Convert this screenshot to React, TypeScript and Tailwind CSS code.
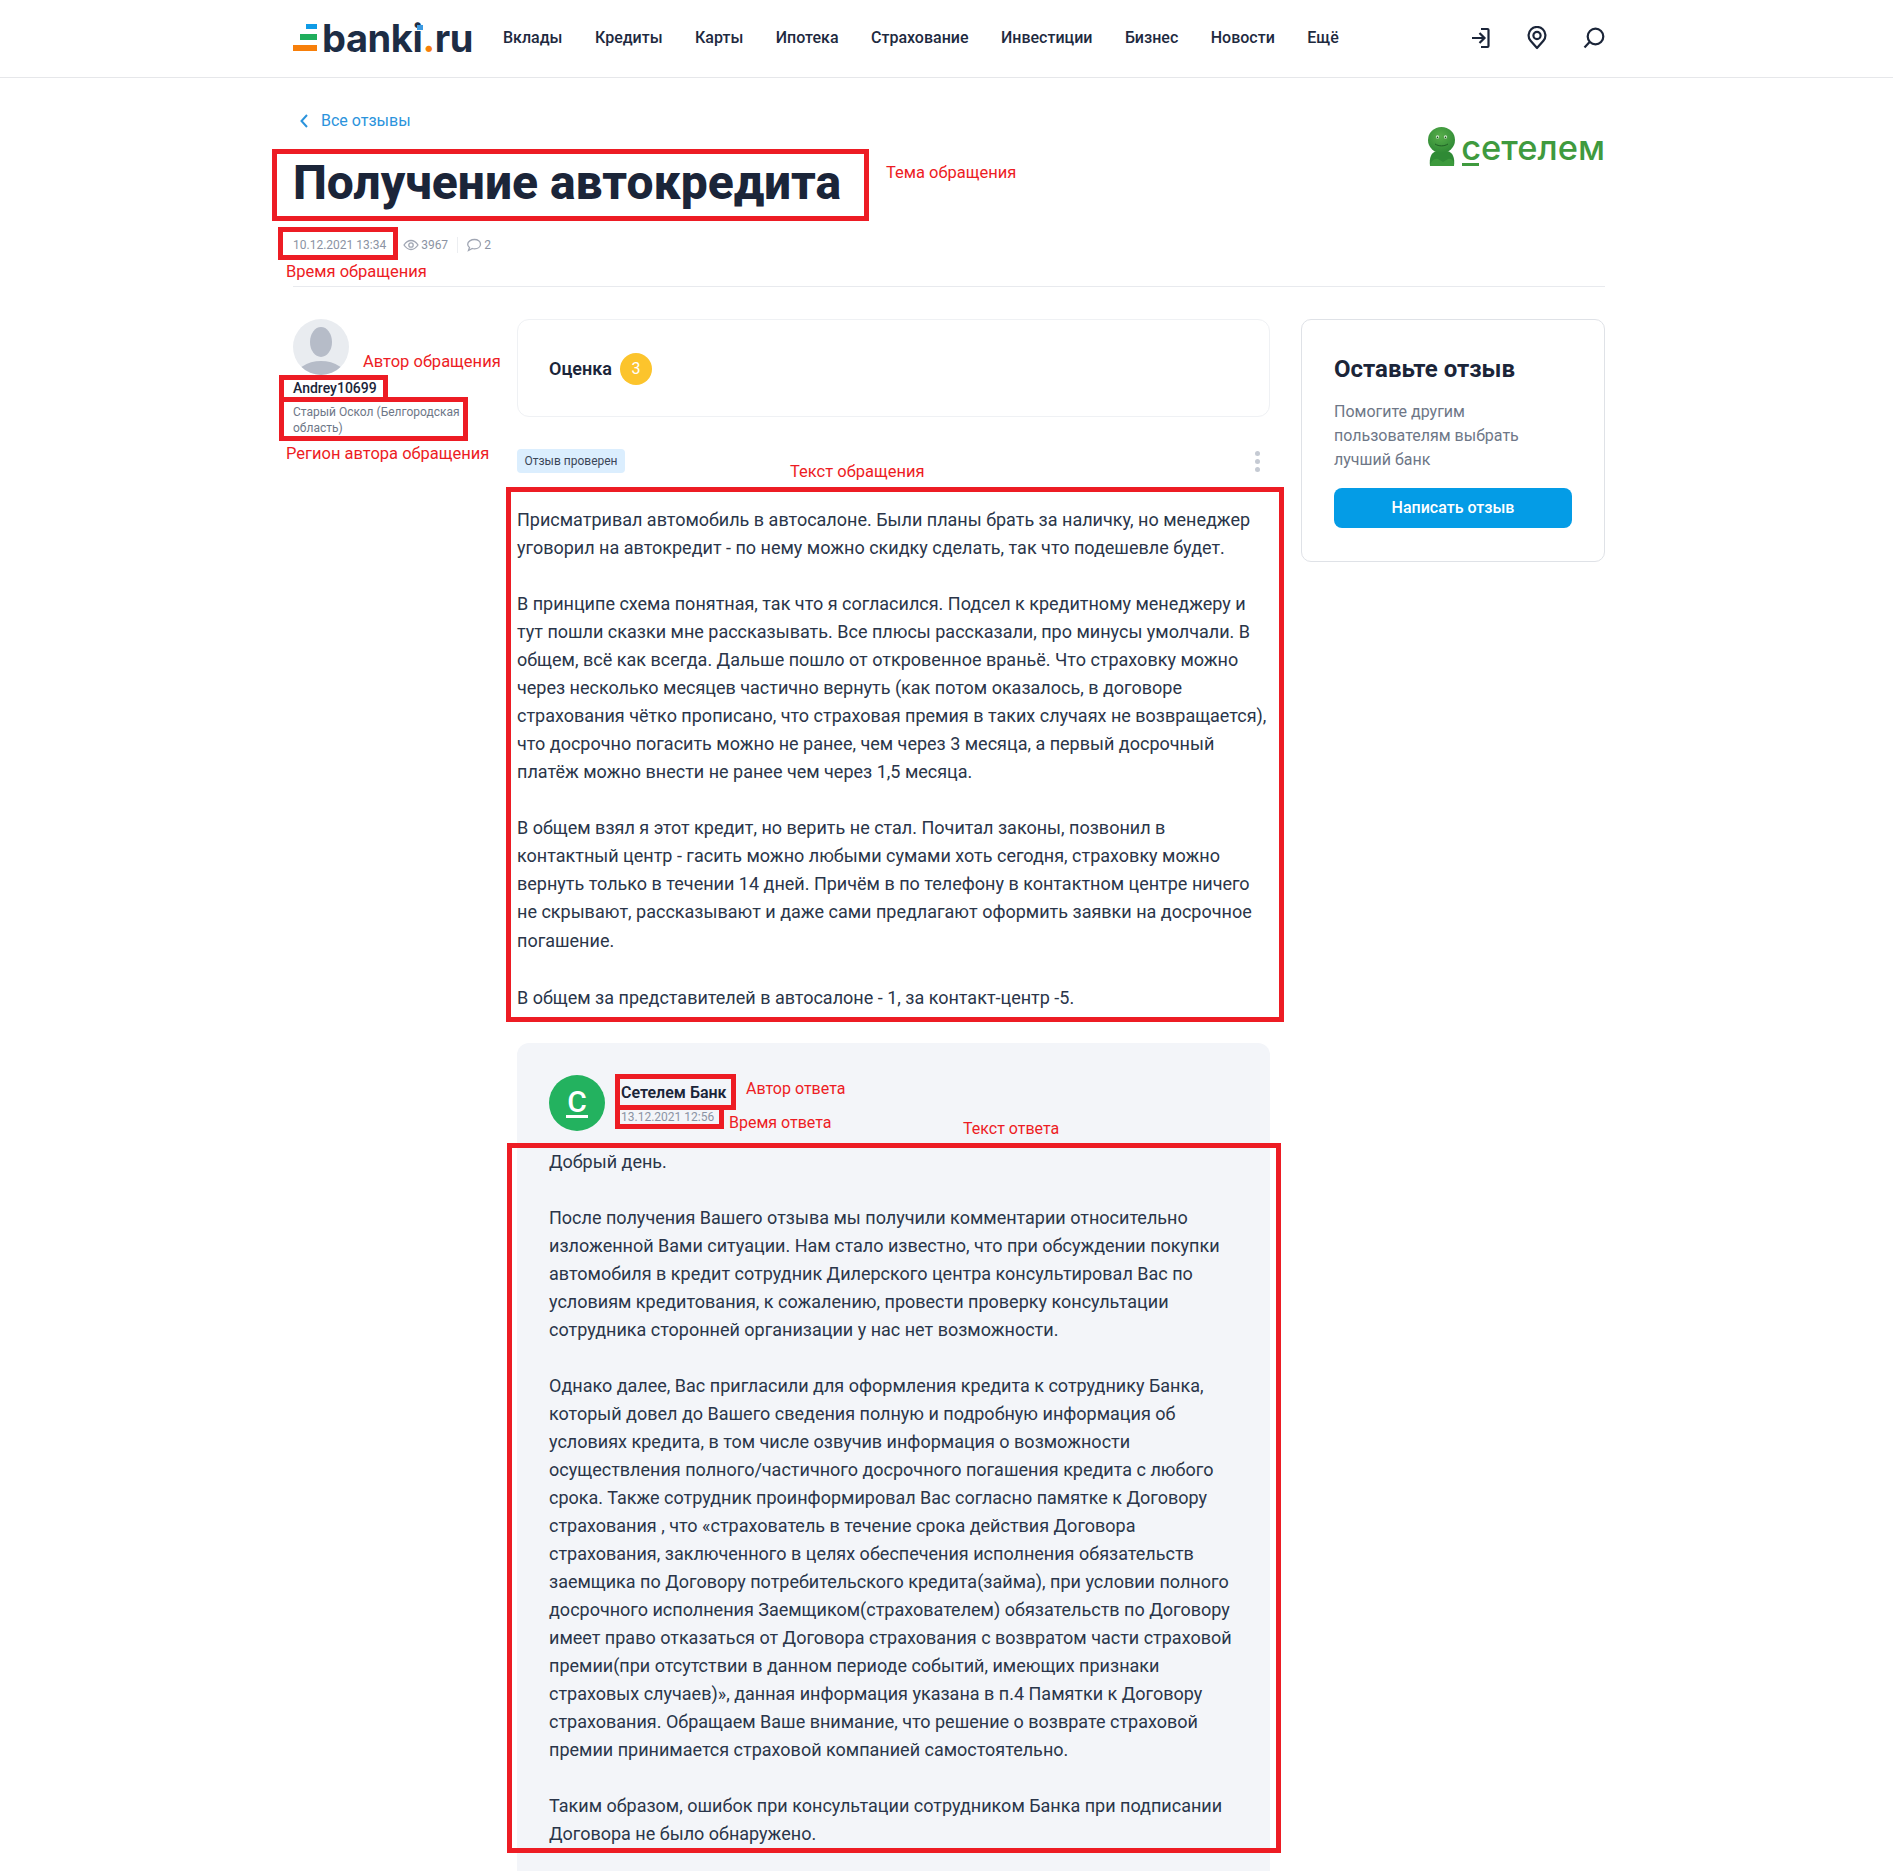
import React from 'react';

const navItems = ['Вклады', 'Кредиты', 'Карты', 'Ипотека', 'Страхование', 'Инвестиции', 'Бизнес', 'Новости', 'Ещё'];

const reviewText = [
  [
    'Присматривал автомобиль в автосалоне. Были планы брать за наличку, но менеджер',
    'уговорил на автокредит - по нему можно скидку сделать, так что подешевле будет.',
  ],
  [
    'В принципе схема понятная, так что я согласился. Подсел к кредитному менеджеру и',
    'тут пошли сказки мне рассказывать. Все плюсы рассказали, про минусы умолчали. В',
    'общем, всё как всегда. Дальше пошло от откровенное враньё. Что страховку можно',
    'через несколько месяцев частично вернуть (как потом оказалось, в договоре',
    'страхования чётко прописано, что страховая премия в таких случаях не возвращается),',
    'что досрочно погасить можно не ранее, чем через 3 месяца, а первый досрочный',
    'платёж можно внести не ранее чем через 1,5 месяца.',
  ],
  [
    'В общем взял я этот кредит, но верить не стал. Почитал законы, позвонил в',
    'контактный центр - гасить можно любыми сумами хоть сегодня, страховку можно',
    'вернуть только в течении 14 дней. Причём в по телефону в контактном центре ничего',
    'не скрывают, рассказывают и даже сами предлагают оформить заявки на досрочное',
    'погашение.',
  ],
  ['В общем за представителей в автосалоне - 1, за контакт-центр -5.'],
];

const answerText = [
  ['Добрый день.'],
  [
    'После получения Вашего отзыва мы получили комментарии относительно',
    'изложенной Вами ситуации. Нам стало известно, что при обсуждении покупки',
    'автомобиля в кредит сотрудник Дилерского центра консультировал Вас по',
    'условиям кредитования, к сожалению, провести проверку консультации',
    'сотрудника сторонней организации у нас нет возможности.',
  ],
  [
    'Однако далее, Вас пригласили для оформления кредита к сотруднику Банка,',
    'который довел до Вашего сведения полную и подробную информация об',
    'условиях кредита, в том числе озвучив информация о возможности',
    'осуществления полного/частичного досрочного погашения кредита с любого',
    'срока. Также сотрудник проинформировал Вас согласно памятке к Договору',
    'страхования , что «страхователь в течение срока действия Договора',
    'страхования, заключенного в целях обеспечения исполнения обязательств',
    'заемщика по Договору потребительского кредита(займа), при условии полного',
    'досрочного исполнения Заемщиком(страхователем) обязательств по Договору',
    'имеет право отказаться от Договора страхования с возвратом части страховой',
    'премии(при отсутствии в данном периоде событий, имеющих признаки',
    'страховых случаев)», данная информация указана в п.4 Памятки к Договору',
    'страхования. Обращаем Ваше внимание, что решение о возврате страховой',
    'премии принимается страховой компанией самостоятельно.',
  ],
  [
    'Таким образом, ошибок при консультации сотрудником Банка при подписании',
    'Договора не было обнаружено.',
  ],
];

const TextBlock: React.FC<{ paragraphs: string[][] }> = ({ paragraphs }) => (
  <div className="flex flex-col gap-7 text-lg leading-7 text-[#2a3549]">
    {paragraphs.map((lines, i) => (
      <p key={i}>
        {lines.map((line, j) => (
          <span key={j} className={line === 'погашение.' ? 'block leading-[30px] whitespace-nowrap' : 'block whitespace-nowrap'}>
            {line}
          </span>
        ))}
      </p>
    ))}
  </div>
);

const Header = () => (
  <header className="flex h-[78px] items-center border-b border-[#e6e7ea] pb-[2px] pl-[293px]">
    <div className="relative flex h-7 w-[210px] shrink-0 items-center">
      {/* logo bars */}
      <div className="flex w-6 flex-col items-end gap-[5px]">
        <div className="h-[5px] w-[11px] bg-[#0f9be6]"></div>
        <div className="h-[6px] w-[17px] bg-[#1fae5c]"></div>
        <div className="h-[6px] w-6 bg-[#f77f0a]"></div>
      </div>
      <span className="ml-[5px] text-[38px] font-bold leading-7 tracking-[-0.4px] text-[#1d2d45] [font-family:Inter,sans-serif]">
        banki<span className="text-[#f77f0a]">.</span>ru
      </span>
      <div className="absolute left-[124px] top-[1px] h-[5px] w-[6px] bg-[#3b9ae1]"></div>
    </div>
    <nav className="flex gap-[32.5px] text-base font-medium text-[#1e2a3f]">
      {navItems.map((item) => (
        <span key={item}>{item}</span>
      ))}
    </nav>
    <div className="ml-[132px] flex items-center gap-[36px] text-[#1b2539]">
      <svg width="20" height="24" viewBox="0 0 20 24" fill="none" stroke="currentColor" strokeWidth="2.2">
        <path d="M10 3h6.5a1 1 0 0 1 1 1v16a1 1 0 0 1-1 1H10" />
        <path d="M1 12h12M8.5 7l5 5-5 5" />
      </svg>
      <svg width="20" height="24" viewBox="0 0 20 24" fill="none" stroke="currentColor" strokeWidth="2.2">
        <path d="M10 22 3.6 14.8A8.4 8.4 0 1 1 16.4 14.8Z" strokeLinejoin="round" />
        <circle cx="10" cy="9.5" r="3.6" />
      </svg>
      <svg width="22" height="22" viewBox="0 0 22 22" fill="none" stroke="currentColor" strokeWidth="2.2">
        <circle cx="12.5" cy="9.5" r="7.8" />
        <path d="M6.6 15 1.5 20.5" />
      </svg>
    </div>
  </header>
);

const Mascot = () => (
  <svg width="30" height="40" viewBox="0 0 30 40">
    <defs>
      <radialGradient id="head-shade" cx="45%" cy="35%" r="65%">
        <stop offset="0%" stopColor="#57ad4a" />
        <stop offset="100%" stopColor="#2f8a35" />
      </radialGradient>
    </defs>
    <path d="M3 39c-1-8 1-14 7-15h10c6 1 8 7 7 15Z" fill="#2f8a35" />
    <path d="M3 39c1-5 4-8 8-7l5 3 5-3c4-1 6 2 6 7Z" fill="#3c9a3c" />
    <ellipse cx="14.500" cy="13" rx="13.500" ry="13" fill="url(#head-shade)" />
    <circle cx="10.500" cy="10" r="1.700" fill="#d5ecd0" />
    <circle cx="18.500" cy="10" r="1.700" fill="#d5ecd0" />
    <circle cx="10.500" cy="10.400" r="0.800" fill="#1c4d20" />
    <circle cx="18.500" cy="10.400" r="0.800" fill="#1c4d20" />
    <path d="M8 17c4 2.500 9 2.500 13 0" fill="none" stroke="#1f5f25" strokeWidth="1" />
  </svg>
);

const Avatar = () => (
  <svg width="56" height="56" viewBox="0 0 56 56">
    <defs>
      <clipPath id="user-clip">
        <circle cx="28" cy="28" r="28" />
      </clipPath>
    </defs>
    <g clipPath="url(#user-clip)">
      <rect width="56" height="56" fill="#e9ecf0" />
      <ellipse cx="28" cy="23" rx="11" ry="15" fill="#b6bcc8" />
      <ellipse cx="28" cy="60" rx="26" ry="18" fill="#b6bcc8" />
    </g>
  </svg>
);

const Annotations = () => (
  <>
    <div className="absolute left-[272px] top-[149px] h-[72px] w-[597px] border-[5px] border-[#ed1c24]"></div>
    <div className="absolute left-[278px] top-[227px] h-[33px] w-[120px] border-[5px] border-[#ed1c24]"></div>
    <div className="absolute left-[279px] top-[375px] h-[27px] w-[109px] border-[5px] border-[#ed1c24]"></div>
    <div className="absolute left-[279px] top-[397px] h-[44px] w-[189px] border-[5px] border-[#ed1c24]"></div>
    <div className="absolute left-[506px] top-[487px] h-[535px] w-[778px] border-[5px] border-[#ed1c24]"></div>
    <div className="absolute left-[615px] top-[1074px] h-[36px] w-[121px] border-[5px] border-[#ed1c24]"></div>
    <div className="absolute left-[615px] top-[1105px] h-[24px] w-[109px] border-[5px] border-[#ed1c24]"></div>
    <div className="absolute left-[507px] top-[1143px] h-[710px] w-[774px] border-[5px] border-[#ed1c24]"></div>

    <span className="absolute left-[886px] top-[161px] text-[16.5px] leading-6 text-[#ed1c24]">Тема обращения</span>
    <span className="absolute left-[286px] top-[260px] text-[16.5px] leading-6 text-[#ed1c24]">Время обращения</span>
    <span className="absolute left-[363px] top-[350px] text-[16.5px] leading-6 text-[#ed1c24]">Автор обращения</span>
    <span className="absolute left-[286px] top-[442px] text-[16.5px] leading-6 text-[#ed1c24]">Регион автора обращения</span>
    <span className="absolute left-[790px] top-[460px] text-[16.5px] leading-6 text-[#ed1c24]">Текст обращения</span>
    <span className="absolute left-[746px] top-[1077px] text-base leading-6 text-[#ed1c24]">Автор ответа</span>
    <span className="absolute left-[729px] top-[1111px] text-base leading-6 text-[#ed1c24]">Время ответа</span>
    <span className="absolute left-[963px] top-[1117px] text-base leading-6 text-[#ed1c24]">Текст ответа</span>
  </>
);

export default function App() {
  return (
    <div className="relative h-[1871px] overflow-hidden bg-white [font-family:Roboto,sans-serif]">
      <Header />

      <main className="ml-[293px] w-[1312px] pt-[31px]">
        <div className="flex justify-between">
          <div>
            <a className="flex h-6 items-center text-base text-[#2b93dc]">
              <svg className="ml-[7px] mr-[13px]" width="8" height="14" viewBox="0 0 8 14" fill="none" stroke="#2b93dc" strokeWidth="2">
                <path d="M7 1 1.500 7 7 13" />
              </svg>
              Все отзывы
            </a>
            <h1 className="mt-[22px] text-5xl font-extrabold leading-14 text-[#1b2539]">Получение автокредита</h1>
            <div className="mt-[26px] flex h-4 items-center text-xs text-[#8b93a3]">
              <span>10.12.2021 13:34</span>
              <svg className="ml-[17px] mr-[2px]" width="16" height="12" viewBox="0 0 16 12" fill="none" stroke="#a0a6b3" strokeWidth="1.3">
                <path d="M1 6c2-3 4.300-4.500 7-4.500S13 3 15 6c-2 3-4.300 4.500-7 4.500S3 9 1 6Z" />
                <circle cx="8" cy="6" r="2.200" />
              </svg>
              <span>3967</span>
              <div className="ml-[9px] mr-[8px] h-4 w-px bg-[#eceef1]"></div>
              <svg className="mr-[2px]" width="16" height="14" viewBox="0 0 16 14" fill="none" stroke="#a0a6b3" strokeWidth="1.3">
                <path d="M8.500 1.500c3.300 0 6 2 6 4.700s-2.700 4.600-6 4.600c-.8 0-1.500-.1-2.200-.3L2.500 12.500l1-3C2.300 8.600 1.700 7.500 1.700 6.200c0-2.700 3.400-4.700 6.800-4.700Z" />
              </svg>
              <span>2</span>
            </div>
          </div>
          <div className="mt-[18px] flex h-10 items-start">
            <Mascot />
            <div className="ml-[4px] flex h-10 flex-col">
              <span className="mt-[7px] text-[34.5px] font-medium leading-[28px] text-[#3f9a3e] [font-family:Inter,sans-serif]">сетелем</span>
              <div className="ml-[1px] mt-[1px] h-[3px] w-[17px] bg-[#3f9a3e]"></div>
            </div>
          </div>
        </div>

        <div className="mt-[33px] h-px bg-[#e8eaee]"></div>

        <div className="mt-8 flex">
          <aside className="w-[224px] shrink-0">
            <Avatar />
            <div className="mt-[3px] text-sm font-medium leading-5 text-[#1b2539]">Andrey10699</div>
            <div className="mt-[6px] w-[180px] text-xs leading-4 text-[#6e7787]">Старый Оскол (Белгородская область)</div>
          </aside>

          <section className="w-[753px] shrink-0">
            <div className="flex h-[98px] items-center rounded-xl border border-[#eff1f4] pl-[31px] pt-px">
              <span className="text-lg font-semibold text-[#1b2539]">Оценка</span>
              <span className="ml-2 flex h-8 w-8 items-center justify-center rounded-full bg-[#fcc42c] text-base text-white">3</span>
            </div>

            <div className="mt-8 flex h-6 items-center justify-between">
              <span className="flex h-6 items-center rounded bg-[#dbeefe] px-[7.5px] text-xs text-[#3b4658]">Отзыв проверен</span>
              <div className="mr-[10px] flex flex-col gap-[3px]">
                <div className="h-[5px] w-[5px] rounded-full bg-[#c5cad3]"></div>
                <div className="h-[5px] w-[5px] rounded-full bg-[#c5cad3]"></div>
                <div className="h-[5px] w-[5px] rounded-full bg-[#c5cad3]"></div>
              </div>
            </div>

            <div className="mt-[33px]">
              <TextBlock paragraphs={reviewText} />
            </div>

            <div className="mt-[31px] rounded-t-xl bg-[#f3f5f9] px-8 pb-8 pt-8">
              <div className="flex items-center gap-4">
                <div className="flex h-14 w-14 flex-col items-center justify-center rounded-full bg-[#23b25f] text-white">
                  <span className="text-[30px] font-medium leading-[26px]">С</span>
                  <div className="h-[3px] w-[22px] bg-white"></div>
                </div>
                <div className="flex flex-col gap-1">
                  <div className="text-base font-semibold leading-6 text-[#1b2539]">Сетелем Банк</div>
                  <div className="text-xs leading-4 text-[#8b93a3]">13.12.2021 12:56</div>
                </div>
              </div>
              <div className="mt-[17px]">
                <TextBlock paragraphs={answerText} />
              </div>
            </div>
          </section>

          <aside className="ml-[31px] h-[243px] w-[304px] shrink-0 rounded-[10px] border border-[#dfe2e7] pl-8 pr-8 pt-[33px]">
            <h3 className="text-2xl font-bold leading-8 text-[#1b2539]">Оставьте отзыв</h3>
            <p className="mt-[15px] w-[220px] text-base leading-6 text-[#6e7787]">Помогите другим пользователям выбрать лучший банк</p>
            <button className="mt-4 h-10 w-full rounded-lg bg-[#049ce6] text-base font-medium text-white">Написать отзыв</button>
          </aside>
        </div>
      </main>

      <Annotations />
    </div>
  );
}
